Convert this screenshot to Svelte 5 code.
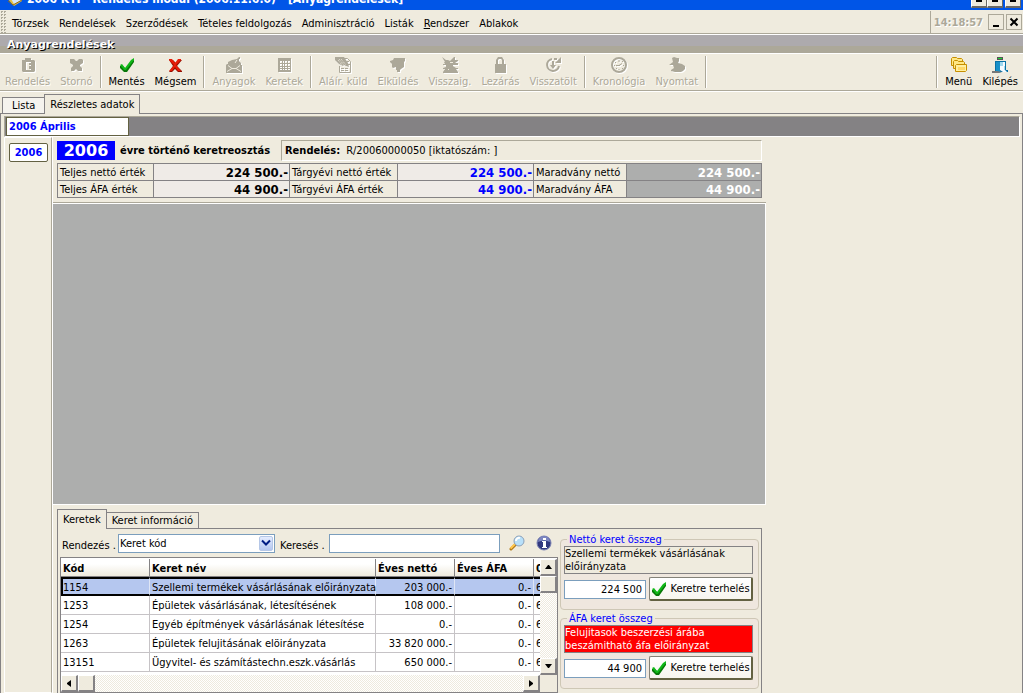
<script>
  const menus = ['Törzsek', 'Rendelések', 'Szerződések', 'Tételes feldolgozás', 'Adminisztráció', 'Listák', 'Rendszer', 'Ablakok'];

  const groups = [
    [
      { label: 'Rendelés', icon: 'clipboard', off: true },
      { label: 'Stornó', icon: 'storno', off: true }
    ],
    [
      { label: 'Mentés', icon: 'check' },
      { label: 'Mégsem', icon: 'cross' }
    ],
    [
      { label: 'Anyagok', icon: 'materials', off: true },
      { label: 'Keretek', icon: 'grid', off: true }
    ],
    [
      { label: 'Aláír. küld', icon: 'sign', off: true },
      { label: 'Elküldés', icon: 'send', off: true },
      { label: 'Visszaig.', icon: 'confirm', off: true },
      { label: 'Lezárás', icon: 'lock', off: true },
      { label: 'Visszatölt', icon: 'reload', off: true }
    ],
    [
      { label: 'Kronológia', icon: 'clock', off: true },
      { label: 'Nyomtat', icon: 'print', off: true }
    ]
  ];

  const rightTools = [
    { label: 'Menü', icon: 'folders' },
    { label: 'Kilépés', icon: 'exit' }
  ];

  const summary = [
    ['Teljes nettó érték', '224 500.-', 'Tárgyévi nettó érték', '224 500.-', 'Maradvány nettó', '224 500.-'],
    ['Teljes ÁFA érték', '44 900.-', 'Tárgyévi ÁFA érték', '44 900.-', 'Maradvány ÁFA', '44 900.-']
  ];

  const rows = [
    ['1154', 'Szellemi termékek vásárlásának előirányzata', '203 000.-', '0.-', '6'],
    ['1253', 'Épületek vásárlásának, létesítésének', '108 000.-', '0.-', '6'],
    ['1254', 'Egyéb építmények vásárlásának létesítése', '0.-', '0.-', '6'],
    ['1263', 'Épületek felujitásának elöirányzata', '33 820 000.-', '0.-', '6'],
    ['13151', 'Ügyvitel- és számítástechn.eszk.vásárlás', '650 000.-', '0.-', '6']
  ];

  const frames = [
    { id: 'netto', title: 'Nettó keret összeg', text: 'Szellemi termékek vásárlásának előirányzata', value: '224 500' },
    { id: 'afa', title: 'ÁFA keret összeg', text: 'Felujitasok beszerzési árába beszámitható áfa előirányzat', value: '44 900', alert: true }
  ];

  let selected = $state(0);
</script>

{#snippet icon(name)}
  <svg class="icon" viewBox="0 0 16 16" width="16" height="16" aria-hidden="true">
    {#if name === 'clipboard'}
      <path fill="currentColor" fill-rule="evenodd" d="M2 3h3V1h6v2h3l1 1v10l-1 1H3l-1-1zM6 5h5v1H9v2h2v1H9v3h2v1H6z" />
    {:else if name === 'storno'}
      <path fill="currentColor" d="M2 2h4l2 2h1l2-2h3l1 1v3l-3 2v1l2 2v3h-4l-2-2H8l-2 2H3v-3l2-2V8L2 6z" />
    {:else if name === 'check'}
      <path fill="#087808" d="M1 9h3l3 3 5-8 3-1v2l-7 10H5L1 11z" />
      <path fill="#10b818" d="M1 8l2-1 3 4L12 3l3-2v2L7 13H5z" />
    {:else if name === 'cross'}
      <path fill="#941000" d="M2 3h4l3 3 3-3h3L10 9l5 5v1h-4l-3-3-3 3H2l4-6z" />
      <path fill="#e71c08" d="M2 2h3l3 4 3-4h3v1L9 8l5 6h-3l-3-4-3 4H2l5-6-5-5z" />
    {:else if name === 'materials'}
      <path fill="currentColor" d="M0 8l1-1h1V5l4-2 5-1 2-2h1v2h-1v2l2 2v2h1v8H0z" />
      <path stroke="#efebde" fill="none" d="M2 8.500l4 3h4l4-3M1 14.500l5-3M15 14.500l-5-3M11 3l-2 3" />
    {:else if name === 'grid'}
      <path fill="currentColor" fill-rule="evenodd" d="M2 1h13v14H2zM4 4v2h2V4zm3 0v2h1V4zm2 0v2h2V4zm3 0v2h2V4zM4 7v2h2V7zm3 0v2h1V7zm2 0v2h2V7zm3 0v2h2V7zM4 10v1h2v-1zm3 0v1h1v-1zm2 0v1h2v-1zm3 0v1h2v-1zM4 12v1h2v-1zm3 0v1h1v-1zm2 0v1h2v-1zm3 0v1h2v-1z" />
    {:else if name === 'sign'}
      <path fill="none" stroke="currentColor" d="M4.500 9v6.500h11V4.500l-3-3H8" />
      <path fill="currentColor" d="M0 0h9l4 6 1 4-3-1-2-1-1 1-4-2-4-4z" />
      <path stroke="currentColor" fill="none" stroke-dasharray="3 1" d="M12 4.500h2M12 7.500h3M6 11.500h8M6 13.500h8" />
      <path stroke="#efebde" fill="none" stroke-dasharray="1 1" d="M4 2l5 6M6 2l5 6M3 3l4 5" />
    {:else if name === 'send'}
      <path fill="currentColor" d="M0 4l3-1 1-2h11v3l-1 1v5l-3 2-1 1v2H7v-2H6v-3l-3 1-1-1V7L0 5z" />
    {:else if name === 'confirm'}
      <path fill="currentColor" d="M0 0l4 3h2l2 1 4-4h1v3h3v1l-3 2h3v2h-5v1l3 2h2v1h-2l2 3v1H1v-1l2-3H1v-1l3-1V8H1V7h2L2 5h1z" />
      <path fill="#efebde" d="M8 5h3v1H8zM6 12h1v1H6z" />
    {:else if name === 'lock'}
      <path fill="currentColor" fill-rule="evenodd" d="M4 7V3l2-3h4l2 3v4h2v9H3V7zM6 7h4V3L9 2H7L6 3z" />
    {:else if name === 'reload'}
      <path fill="none" stroke="currentColor" stroke-width="2" d="M7 2A6 6 0 1 0 14 9M9 2h3" />
      <path fill="currentColor" d="M10 6h6V0zM7 4h2v6H7zM5 8h6l-3 4z" />
    {:else if name === 'clock'}
      <circle cx="8" cy="8" r="7" fill="none" stroke="currentColor" stroke-width="2" />
      <path stroke="currentColor" fill="none" d="M8 8.500l3-2M5 8.500h4M8 3v2M8 12v1M12 8.500h1M3 8.500h1M4 5l1 1M5 12l1-1M11 11l1 1M11 4l1 1" />
    {:else if name === 'print'}
      <path fill="currentColor" d="M3 1l2-1 3 1h2v3l-1 2 4 1 3 2v3l-2 2-2 1H6l-4-1v-1l3-2-1-3H0V8l4-3z" />
    {:else if name === 'folders'}
      <g fill="#ffe784" stroke="#c68e00">
        <path d="M.500 8.500v-7l1-1h4l1 1h4l1 1v6z" />
        <path d="M2.500 11.500v-7l1-1h3l1 1h5l1 1v6z" />
        <path fill="#ffefa0" d="M4.500 14.500v-6l1-1h10v6l-1 1z" />
      </g>
      <path fill="#ffd868" d="M7 10h7v3H7z" />
    {:else if name === 'exit'}
      <path fill="#555" d="M5 0h6v3H5z" />
      <path fill="#18d830" d="M6 1h4v1H6z" />
      <path fill="#0871a5" d="M3 4h11v9h2v2H9l-3 1H0v-2h3z" />
      <path fill="#f5fbff" d="M8 5h5v8l2 2h-4l-3-2z" />
      <path fill="#9fd8ef" d="M8 5h3v4H8zM12 9h1v4h-1z" />
      <path fill="#1890c8" d="M4 5h4v10H4z" />
      <path fill="#777" d="M0 14h5l5 1-3 1H0z" />
    {/if}
  </svg>
{/snippet}

{#snippet tool(t)}
  <button class="tool" class:off={t.off} disabled={t.off}>
    {@render icon(t.icon)}
    <span>{t.label}</span>
  </button>
{/snippet}

<div class="app">
  <header class="titlebar">
    <svg class="appicon" viewBox="0 0 16 16" width="16" height="16" aria-hidden="true">
      <path fill="#e8c040" d="M0 8l5 6 2 2 8-5V6L5 2z" />
      <path fill="#d8e8f8" d="M3 7l9-4 3 7-8 4z" />
      <path stroke="#8a6a20" fill="none" d="M1 11l5 4 9-5" />
    </svg>
    <span class="title">2006 KTI - Rendelés modul (2006.11.6.0) - [Anyagrendelések]</span>
    <div class="winbtns">
      <button aria-label="Kis méret"><i></i></button>
      <button aria-label="Előző méret"><i></i></button>
      <button class="last" aria-label="Bezárás"><i></i></button>
    </div>
  </header>

  <nav class="menubar">
    <span class="grip"></span>
    {#each menus as m}
      <button class="menu">{#if m === 'Rendszer'}<u>R</u>endszer{:else}{m}{/if}</button>
    {/each}
    <div class="clockbox">
      <time>14:18:57</time>
      <button class="mdi" aria-label="Ablak kis méret">
        <svg viewBox="0 0 14 14" width="14" height="14"><path fill="#000" d="M4 10h6v2H4z" /></svg>
      </button>
      <button class="mdi" aria-label="Ablak bezárása">
        <svg viewBox="0 0 14 14" width="14" height="14"><path stroke="#000" stroke-width="2" d="M3.500 3.500l7 7M10.500 3.500l-7 7" /></svg>
      </button>
    </div>
  </nav>

  <h1>Anyagrendelések</h1>

  <div class="toolbar">
    {#each groups as g}
      {#each g as t}{@render tool(t)}{/each}
      <span class="sep"></span>
    {/each}
    <div class="right">
      <span class="sep"></span>
      {#each rightTools as t}{@render tool(t)}{/each}
    </div>
  </div>

  <div class="tabs outer">
    <button class="tab">Lista</button>
    <button class="tab active">Részletes adatok</button>
  </div>

  <div class="page">
    <div class="band">
      <input class="month" aria-label="Hónap" value="2006 Április" />
    </div>
    <div class="cols">
      <aside>
        <input class="year" aria-label="Év" value="2006" />
      </aside>
      <main>
        <div class="head">
          <strong class="badge">2006</strong>
          <strong class="desc">évre történő keretreosztás</strong>
          <div class="order"><strong>Rendelés:</strong><span>R/20060000050 [iktatószám: ]</span></div>
        </div>

        <table class="summary">
          <colgroup>
            <col class="s1" /><col class="s2" /><col class="s3" /><col class="s2" /><col class="s4" /><col />
          </colgroup>
          <tbody>
            {#each summary as r}
              <tr>
                <th>{r[0]}</th><td>{r[1]}</td>
                <th>{r[2]}</th><td class="blue">{r[3]}</td>
                <th>{r[4]}</th><td class="rest">{r[5]}</td>
              </tr>
            {/each}
          </tbody>
        </table>

        <div class="canvas"></div>

        <section class="bottom">
          <div class="tabs">
            <button class="tab active">Keretek</button>
            <button class="tab">Keret információ</button>
          </div>
          <div class="panel">
            <div class="left">
              <div class="filter">
                <label for="sort">Rendezés .</label>
                <div class="combo">
                  <select id="sort"><option>Keret kód</option><option>Keret név</option></select>
                  <span class="drop"><svg viewBox="0 0 10 8" width="10" height="8"><path d="M1 1.500l4 4 4-4" fill="none" stroke="#001c84" stroke-width="2" /></svg></span>
                </div>
                <label for="find">Keresés .</label>
                <input id="find" />
                <button class="plain" aria-label="Keresés indítása">
                  <svg viewBox="0 0 16 16" width="16" height="16">
                    <path d="M2 14l5-5" stroke="#b07818" stroke-width="3" stroke-linecap="round" />
                    <path d="M1.500 13.500l5-5" stroke="#ffc850" stroke-width="2" />
                    <circle cx="10" cy="6" r="5" fill="#b8e0fa" stroke="#8ca0b8" />
                    <path d="M7 6a3 3 0 0 1 4-3" stroke="#fff" stroke-width="2" fill="none" />
                  </svg>
                </button>
                <button class="plain" aria-label="Információ">
                  <svg viewBox="0 0 16 16" width="16" height="16">
                    <circle cx="8" cy="8" r="7" fill="#31387f" stroke="#7c84b4" />
                    <path d="M2 7a6 6 0 0 1 12 0q-6-3-12 0z" fill="#7c86c0" />
                    <path fill="#fff" d="M7 3h3v2H7zM6 6h4v6h1v1H6v-1h1V7H6z" />
                  </svg>
                </button>
              </div>

              <div class="gridbox">
                <div class="gridtop">
                  <div class="clip">
                    <table class="list">
                      <colgroup>
                        <col class="c1" /><col class="c2" /><col class="c3" /><col class="c3" /><col class="c4" />
                      </colgroup>
                      <thead>
                        <tr><th>Kód</th><th>Keret név</th><th>Éves nettó</th><th>Éves ÁFA</th><th>0</th></tr>
                      </thead>
                      <tbody>
                        {#each rows as r, i}
                          <tr class:sel={selected === i} onclick={() => (selected = i)}>
                            <td>{r[0]}</td><td>{r[1]}</td><td class="num">{r[2]}</td><td class="num">{r[3]}</td><td>{r[4]}</td>
                          </tr>
                        {/each}
                      </tbody>
                    </table>
                  </div>
                  <div class="scroll v">
                    <button aria-label="Fel"><svg viewBox="0 0 7 4" width="7" height="4"><path d="M0 4h7L4 0H3z" /></svg></button>
                    <span class="thumb"></span>
                    <button class="end" aria-label="Le"><svg viewBox="0 0 7 4" width="7" height="4"><path d="M0 0h7L4 4H3z" /></svg></button>
                  </div>
                </div>
                <div class="gridfoot">
                  <div class="scroll h">
                    <button aria-label="Balra"><svg viewBox="0 0 4 7" width="4" height="7"><path d="M4 0v7L0 4V3z" /></svg></button>
                    <span class="thumb"></span>
                    <button class="end" aria-label="Jobbra"><svg viewBox="0 0 4 7" width="4" height="7"><path d="M0 0v7l4-3V3z" /></svg></button>
                  </div>
                  <span class="corner"></span>
                </div>
              </div>
            </div>

            <div class="frames">
              {#each frames as f}
                <fieldset>
                  <legend>{f.title}</legend>
                  <p class:alert={f.alert}>{f.text}</p>
                  <div class="charge">
                    <input id={f.id} aria-label={f.title} value={f.value} />
                    <button>{@render icon('check')}<span>Keretre terhelés</span></button>
                  </div>
                </fieldset>
              {/each}
            </div>
          </div>
        </section>
      </main>
    </div>
  </div>
</div>

<style>
  :global(body) {
    overflow: hidden;
    background: #efebde;
  }
  .app {
    height: 100vh;
    display: flex;
    flex-direction: column;
    overflow: hidden;
    background: #efebde;
    color: #000;
    font: 11px/13px 'DejaVu Sans Condensed', 'DejaVu Sans', sans-serif;
  }
  .app * {
    box-sizing: border-box;
  }
  button, input, select {
    font: inherit;
    color: inherit;
    margin: 0;
    padding: 0;
    border: 0;
    border-radius: 0;
    background: none;
    white-space: nowrap;
  }
  svg {
    display: block;
    flex: none;
  }

  .titlebar {
    flex: none;
    height: 10px;
    overflow: hidden;
    display: flex;
    align-items: flex-end;
    padding: 0 2px 4px 7px;
    gap: 4px;
    background: #0055e7;
    color: #fff;
    font-size: 12px;
    line-height: 14px;
    font-weight: bold;
  }
  .title {
    flex: 1;
    white-space: nowrap;
  }
  .winbtns {
    display: flex;
    margin-bottom: -2px;
  }
  .winbtns button {
    width: 16px;
    height: 14px;
    padding: 0 4px 4px;
    display: flex;
    align-items: flex-end;
    background: #efebde;
    border: 1px solid #fff;
    border-right-color: #6b6963;
    border-bottom: 2px solid #6b6963;
  }
  .winbtns .last {
    margin-left: 2px;
  }
  .winbtns i {
    width: 6px;
    height: 2px;
    background: #000;
  }

  .menubar {
    flex: none;
    height: 25px;
    display: flex;
    align-items: center;
    border-bottom: 1px solid #fff;
    box-shadow: inset 0 -1px #aca899;
  }
  .grip {
    width: 7px;
    height: 22px;
    background: conic-gradient(#aca899 25%, transparent 0) 0 0 / 3px 3px;
  }
  .menu {
    padding: 2px 5px 0;
  }
  .clockbox {
    margin-left: auto;
    height: 22px;
    display: flex;
    align-items: center;
    gap: 2px;
    padding: 0 1px 0 3px;
    border-left: 1px solid #aca899;
  }
  time {
    color: #aca899;
    font-weight: bold;
    text-shadow: 1px 1px #fff;
    margin-right: 3px;
  }
  .mdi {
    width: 16px;
    height: 16px;
    border: 1px solid #fff;
    outline: 1px solid #aca899;
    outline-offset: -1px;
  }

  h1 {
    flex: none;
    height: 19px;
    margin: 0;
    padding: 1px 7px 0;
    background: linear-gradient(#adaaad 60%, #aca899 60%);
    border-bottom: 1px solid #fff;
    color: #fff;
    font: bold 11px/18px 'DejaVu Sans', sans-serif;
    text-shadow: 1px 1px #000;
  }

  .toolbar {
    flex: none;
    height: 38px;
    display: flex;
    border-bottom: 1px solid #fff;
    box-shadow: inset 0 -1px #aca899;
  }
  .tool {
    height: 35px;
    padding: 3px 5px 0;
    display: flex;
    flex-direction: column;
    align-items: center;
    gap: 2px;
  }
  .off {
    color: #aca899;
    text-shadow: 1px 1px #fff;
  }
  .off .icon {
    filter: drop-shadow(1px 1px 0 #fff);
  }
  .sep {
    width: 2px;
    height: 32px;
    margin: 2px 2px 0;
    border-left: 1px solid #aca899;
    border-right: 1px solid #fff;
  }
  .right {
    margin-left: auto;
    display: flex;
  }

  .tabs {
    display: flex;
    align-items: flex-end;
    position: relative;
    z-index: 1;
    margin-bottom: -1px;
  }
  .outer {
    flex: none;
    height: 22px;
    padding: 0 2px;
  }
  .tab {
    height: 17px;
    padding: 0 5px;
    border: 1px solid #848284;
    background: #f5f3ee;
    margin-left: -1px;
  }
  .tab:first-child {
    margin-left: 0;
  }
  .tab.active {
    height: 20px;
    background: #efebde;
    border-bottom: 0;
  }
  .outer .tab:first-child {
    padding: 0 9px;
  }

  .page {
    flex: 1;
    min-height: 0;
    display: flex;
    flex-direction: column;
    padding: 2px 2px 0 3px;
    border: 1px solid #848284;
    border-width: 1px 1px 0;
  }
  .band {
    flex: none;
    height: 21px;
    padding: 0 1px;
    background: #848284;
    border: 1px solid #aca899;
    border-bottom-color: #fff;
    border-right-color: #fff;
  }
  .month, .year {
    background: #fff;
    border: 1px solid #636142;
    color: #00f;
    font-weight: bold;
  }
  .month {
    display: block;
    width: 123px;
    height: 19px;
    padding: 0 2px;
  }
  .cols {
    flex: 1;
    min-height: 0;
    display: flex;
  }
  aside {
    width: 48px;
    padding: 5px 4px;
    border: 1px solid #fff;
    border-right-color: #aca899;
    box-shadow: 1px 0 #fff;
  }
  .year {
    width: 39px;
    height: 19px;
    text-align: center;
    border-radius: 2px;
  }
  main {
    width: 713px;
    margin-left: 1px;
    min-height: 0;
    display: flex;
    flex-direction: column;
  }

  .head {
    flex: none;
    display: flex;
    align-items: center;
    margin: 3px 4px 2px;
  }
  .badge {
    width: 58px;
    height: 19px;
    background: #00f;
    color: #fff;
    text-align: center;
    font: bold 16px/19px 'DejaVu Sans', sans-serif;
  }
  .desc {
    width: 166px;
    padding-left: 5px;
    white-space: nowrap;
  }
  .order {
    flex: 1;
    height: 21px;
    display: flex;
    align-items: center;
    gap: 6px;
    padding: 0 3px;
    border: 1px solid #aca899;
    border-right-color: #fff;
    border-bottom-color: #fff;
  }

  .summary {
    flex: none;
    width: calc(100% - 8px);
    margin: 0 4px 5px;
    border-collapse: collapse;
    table-layout: fixed;
    line-height: 15px;
  }
  .s1 { width: 96px; }
  .s2 { width: 136px; }
  .s3 { width: 108px; }
  .s4 { width: 93px; }
  .summary th, .summary td {
    height: 17px;
    padding: 1px 2px 0;
    border: 1px solid #848284;
    white-space: nowrap;
  }
  .summary th {
    text-align: left;
    font-weight: normal;
  }
  .summary td {
    padding: 1px 1px 0;
    background: #efebe7;
    text-align: right;
    font-size: 13px;
    font-weight: bold;
  }
  .summary .blue {
    color: #00f;
  }
  .summary .rest {
    background: #adaead;
    color: #fff;
  }

  .canvas {
    flex: 1;
    background: #adaead;
    border: 1px solid #fff;
    border-left: 0;
    box-shadow: 0 -1px #aca899;
  }

  .bottom {
    flex: none;
    padding: 4px 4px 0;
  }
  .bottom .tab {
    background: #efebde;
  }
  .panel {
    display: flex;
    gap: 2px;
    height: 165px;
    padding: 4px 2px 0;
    border: 1px solid #848284;
    border-bottom: 0;
  }
  .left {
    flex: 1;
    min-width: 0;
  }
  .filter {
    display: flex;
    align-items: center;
    height: 20px;
    margin-bottom: 4px;
    padding-left: 2px;
  }
  .filter label {
    padding-top: 4px;
    white-space: nowrap;
    width: 56px;
  }
  .combo {
    display: flex;
    position: relative;
    width: 157px;
    margin-right: 5px;
  }
  .combo select {
    appearance: none;
    width: 100%;
    height: 19px;
    padding: 0 1px;
    background: #fff;
    border: 1px solid #7b9ebd;
  }
  .drop {
    position: absolute;
    right: 2px;
    top: 2px;
    width: 14px;
    height: 15px;
    display: grid;
    place-items: center;
    background: linear-gradient(#e4ecff, #b5c7f0);
    border: 1px solid #b5c7e7;
    border-radius: 2px;
    pointer-events: none;
  }
  #find {
    flex: 1;
    min-width: 0;
    height: 19px;
    margin-right: 4px;
    background: #fff;
    border: 1px solid #7b9ebd;
    padding: 0 2px;
  }
  label[for='find'] {
    width: 49px;
  }
  .plain {
    width: 16px;
    height: 18px;
    margin: 0 6px 0 5px;
  }

  .gridbox {
    border: 1px solid #848284;
    background: #fff;
  }
  .gridtop {
    display: flex;
    height: 117px;
    padding-top: 1px;
  }
  .clip {
    flex: 1;
    min-width: 0;
    overflow: hidden;
  }
  .list {
    width: 520px;
    border-collapse: separate;
    border-spacing: 0;
    table-layout: fixed;
  }
  .c1 { width: 89px; }
  .c2 { width: 226px; }
  .c3 { width: 79px; }
  .c4 { width: 47px; }
  .list th, .list td {
    height: 19px;
    padding: 1px 2px 0;
    text-align: left;
    white-space: nowrap;
    border-right: 1px solid #c6c3c6;
    border-bottom: 1px solid #c6c3c6;
  }
  .list th {
    background: linear-gradient(#fff 30%, #efebde);
    border-right-color: #848284;
    border-bottom-color: #848284;
    height: 18px;
  }
  .list .num {
    text-align: right;
  }
  .list .sel td {
    background: #b5c7ef;
    border-top: 2px solid #000;
    border-bottom: 2px solid #000;
    border-right-color: #dfe6f5;
  }
  .list .sel td:first-child {
    border-left: 2px solid #000;
    padding-left: 0;
  }

  .scroll {
    display: flex;
    background: repeating-conic-gradient(#fff 0 25%, #eeeade 0 50%) 0 0 / 2px 2px;
  }
  .scroll.v {
    width: 17px;
    flex-direction: column;
  }
  .scroll.h {
    flex: 1;
    height: 17px;
  }
  .scroll button, .thumb {
    width: 17px;
    height: 17px;
    display: grid;
    place-items: center;
    background: #efebde;
    border: 1px solid #fff;
    border-right: 2px solid #848284;
    border-bottom: 2px solid #848284;
  }
  .scroll.v .end {
    margin-top: auto;
  }
  .scroll.h .end {
    margin-left: auto;
  }
  .gridfoot {
    display: flex;
  }
  .corner {
    width: 17px;
    background: #efebde;
  }

  .frames {
    width: 199px;
    flex: none;
    display: flex;
    flex-direction: column;
    gap: 2px;
  }
  fieldset {
    margin: 0;
    padding: 0 5px 8px 3px;
    border: 1px solid #cec7b5;
    border-radius: 4px;
    min-width: 0;
    background: #efe7de;
  }
  legend {
    margin-left: 3px;
    padding: 0 2px;
    color: #00f;
  }
  fieldset p {
    margin: 0 0 3px;
    height: 28px;
    border: 1px solid #848284;
    background: #efebde;
    padding-right: 20px;
  }
  fieldset .alert {
    background: #f00;
    color: #fff;
  }
  .charge {
    display: flex;
    align-items: center;
    gap: 3px;
  }
  .charge input {
    width: 82px;
    height: 19px;
    background: #fff;
    border: 1px solid #7b9ebd;
    text-align: right;
    padding: 0 3px;
  }
  .charge button {
    flex: 1;
    height: 24px;
    display: flex;
    align-items: center;
    justify-content: center;
    gap: 3px;
    background: linear-gradient(#fff, #f7f5ef);
    border: 1px solid #848278;
    border-right: 2px solid #636142;
    border-bottom: 2px solid #636142;
    border-radius: 2px;
  }
</style>
